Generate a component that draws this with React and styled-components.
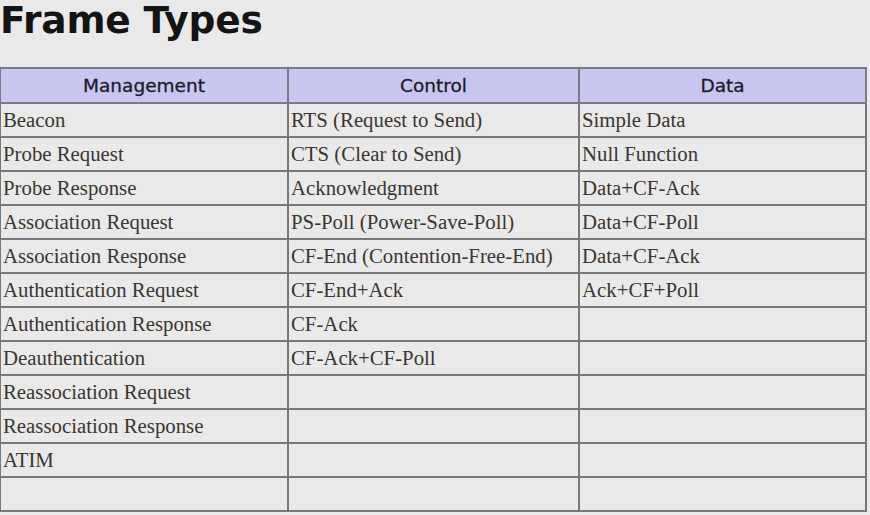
import React from 'react';
import styled, { createGlobalStyle } from 'styled-components';

const management = [
  'Beacon',
  'Probe Request',
  'Probe Response',
  'Association Request',
  'Association Response',
  'Authentication Request',
  'Authentication Response',
  'Deauthentication',
  'Reassociation Request',
  'Reassociation Response',
  'ATIM',
  '',
];

const control = [
  'RTS (Request to Send)',
  'CTS (Clear to Send)',
  'Acknowledgment',
  'PS-Poll (Power-Save-Poll)',
  'CF-End (Contention-Free-End)',
  'CF-End+Ack',
  'CF-Ack',
  'CF-Ack+CF-Poll',
];

const data = [
  'Simple Data',
  'Null Function',
  'Data+CF-Ack',
  'Data+CF-Poll',
  'Data+CF-Ack',
  'Ack+CF+Poll',
];

export default function App() {
  return (
    <>
      <GlobalStyle />
      <Page>
        <Title>Frame Types</Title>
        <Table>
          <thead>
            <tr>
              <Head>Management</Head>
              <Head>Control</Head>
              <Head>Data</Head>
            </tr>
          </thead>
          <tbody>
            {management.map((m, i) => (
              <tr key={i}>
                <Cell>{m}</Cell>
                <Cell>{control[i] || ''}</Cell>
                <Cell>{data[i] || ''}</Cell>
              </tr>
            ))}
          </tbody>
        </Table>
      </Page>
    </>
  );
}

const GlobalStyle = createGlobalStyle`
  html, body {
    margin: 0;
    padding: 0;
    background: #e9e9e9;
  }
`;

const Page = styled.div`
  width: 870px;
  height: 515px;
  overflow: hidden;
  background: #e9e9e9;
`;

const Title = styled.h1`
  margin: 0;
  height: 67px;
  font-family: 'DejaVu Sans', 'Liberation Sans', sans-serif;
  font-weight: bold;
  font-size: 37.5px;
  line-height: 40px;
  color: #141414;
  letter-spacing: -0.2px;
`;

const Table = styled.table`
  width: 868px;
  border-collapse: collapse;
  table-layout: fixed;
  margin-left: -1px;
  border-bottom: 2px solid #777;
  border-right: 2px solid #777;
`;

const Head = styled.th`
  height: 33px;
  padding: 0;
  background: #c8c6ee;
  border: 2px solid #7a7a86;
  font-family: 'DejaVu Sans', sans-serif;
  font-weight: normal;
  font-size: 18.5px;
  color: #1c1c2a;
  text-align: center;
  -webkit-text-stroke: 0.3px #1c1c2a;
  &:nth-child(1) { width: 286px; }
  &:nth-child(2) { width: 289px; }
`;

const Cell = styled.td`
  height: 32px;
  padding: 0 0 0 2px;
  border: 2px solid #777;
  font-family: 'Liberation Serif', serif;
  font-size: 20.8px;
  color: #3b3631;
  white-space: nowrap;
  overflow: hidden;
`;
